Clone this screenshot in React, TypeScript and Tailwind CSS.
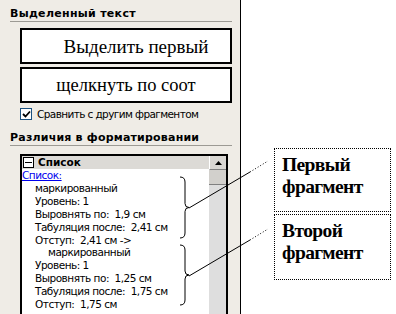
import React from 'react';

const ui = { fontFamily: '"DejaVu Sans", Verdana, sans-serif' };
const serif = { fontFamily: '"Liberation Serif", "Times New Roman", serif' };

const lines: { text: string; indent: number }[] = [
  { text: 'маркированный', indent: 13 },
  { text: 'Уровень: 1', indent: 13 },
  { text: 'Выровнять по:  1,9 см', indent: 13 },
  { text: 'Табуляция после:  2,41 см', indent: 13 },
  { text: 'Отступ:  2,41 см ->', indent: 13 },
  { text: 'маркированный', indent: 26 },
  { text: 'Уровень: 1', indent: 13 },
  { text: 'Выровнять по:  1,25 см', indent: 13 },
  { text: 'Табуляция после:  1,75 см', indent: 13 },
  { text: 'Отступ:  1,75 см', indent: 13 },
];

function Brace({ y1, y2 }: { y1: number; y2: number }) {
  const m = (y1 + y2) / 2;
  const x = 180;
  return (
    <path
      d={`M${x} ${y1} Q${x + 5} ${y1} ${x + 5} ${y1 + 5} L${x + 5} ${m - 4} Q${x + 5} ${m} ${x + 9} ${m} Q${x + 5} ${m} ${x + 5} ${m + 4} L${x + 5} ${y2 - 5} Q${x + 5} ${y2} ${x} ${y2}`}
      fill="none"
      stroke="#000"
      strokeWidth="1"
    />
  );
}

export default function App() {
  return (
    <div className="relative w-[396px] h-[314px] bg-white overflow-hidden">
      <div
        className="w-[241px] h-full bg-[#efece6] border-r border-black pt-[7px] pl-[10px] pr-[8px] text-black"
        style={ui}
      >
        <div className="text-[11px] font-bold leading-[13px] tracking-[0.3px] pb-[1px] border-b border-[#9c9a94]">
          Выделенный текст
        </div>
        <div className="ml-[10px] mt-[6px] flex flex-col gap-[3px]">
          <div
            className="h-[36px] border-2 border-black bg-white flex items-center justify-center pl-[20px] text-[19px] leading-none"
            style={serif}
          >
            Выделить первый
          </div>
          <div
            className="h-[36px] border-2 border-black bg-white flex items-center justify-center text-[18.5px] leading-none"
            style={serif}
          >
            щелкнуть по соот
          </div>
        </div>
        <div className="ml-[10px] mt-[4px] flex items-center gap-[5px] h-[14px]">
          <div className="w-[12px] h-[12px] bg-white border border-[#1c5180] flex items-center justify-center">
            <svg width="9" height="8" viewBox="0 0 9 8">
              <path d="M1 4 L3.5 6.5 L8 1.5" fill="none" stroke="#000" strokeWidth="1.8" />
            </svg>
          </div>
          <span className="text-[10.5px] leading-none tracking-[-0.6px]">Сравнить с другим фрагментом</span>
        </div>
        <div className="mt-[10px] text-[11px] font-bold leading-[13px] tracking-[0.2px] pb-[1px] border-b border-[#9c9a94]">
          Различия в форматировании
        </div>
        <div className="ml-[10px] mr-[4px] mt-[8px] h-[200px] border-2 border-black bg-white flex">
          <div className="flex-1 min-w-0">
            <div className="h-[13px] bg-[#dcdad6] flex items-center gap-[4px] pl-[1px]">
              <div className="w-[11px] h-[11px] border border-black bg-white flex items-center justify-center">
                <div className="w-[7px] h-[1px] bg-black" />
              </div>
              <span className="text-[10.5px] font-bold leading-none">Список</span>
            </div>
            <div className="text-[10.5px] leading-[12.9px] tracking-[-0.5px]">
              <div className="text-[#0000ee] underline">Список:</div>
              {lines.map((l, i) => (
                <div key={i} style={{ paddingLeft: l.indent }} className="whitespace-pre">
                  {l.text}
                </div>
              ))}
            </div>
          </div>
          <div className="w-[17px] flex flex-col bg-[#dedede]">
            <div className="h-[14px] bg-[#d8d6d2] border-l border-white border-b border-b-[#808080] flex items-center justify-center">
              <svg width="7" height="4" viewBox="0 0 7 4">
                <path d="M0 4 L3.5 0 L7 4 Z" fill="#000" />
              </svg>
            </div>
            <div className="h-[15px] bg-[#d2d0cc] border-b border-[#808080]" />
          </div>
        </div>
      </div>

      <svg className="absolute left-0 top-0" width="396" height="314">
        <Brace y1={177} y2={238} />
        <Brace y1={245} y2={305} />
        <line x1="189" y1="208" x2="250" y2="172" stroke="#000" strokeWidth="1" />
        <line x1="250" y1="172" x2="268" y2="161" stroke="#000" strokeWidth="1" strokeDasharray="1 2" />
        <line x1="189" y1="276" x2="250" y2="240" stroke="#000" strokeWidth="1" />
        <line x1="250" y1="240" x2="268" y2="229" stroke="#000" strokeWidth="1" strokeDasharray="1 2" />
      </svg>

      <div
        className="absolute left-[274px] top-[148px] w-[117px] h-[64px] border border-dotted border-black bg-white pl-[7px] pt-[5px] text-[19.5px] font-bold leading-[22px] tracking-[-0.6px]"
        style={serif}
      >
        Первый
        <br />
        фрагмент
      </div>
      <div
        className="absolute left-[274px] top-[214px] w-[117px] h-[66px] border border-dotted border-black bg-white pl-[7px] pt-[5px] text-[19.5px] font-bold leading-[22px] tracking-[-0.6px]"
        style={serif}
      >
        Второй
        <br />
        фрагмент
      </div>
    </div>
  );
}
